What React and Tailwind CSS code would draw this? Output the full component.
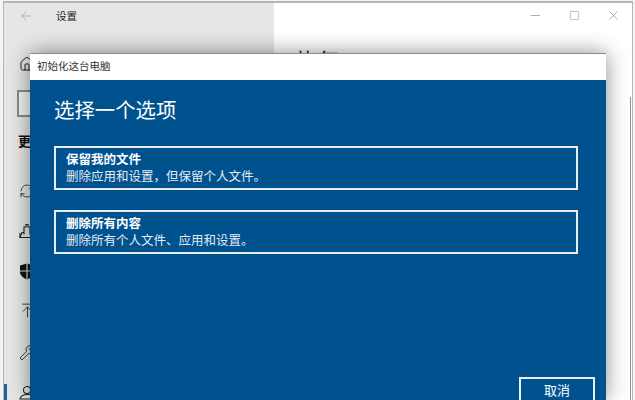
import { Home, RefreshCw, ArrowUpToLine, Wrench, ArrowLeft, Minus, Square, X } from 'lucide-react';

const font = "font-['Noto_Sans_CJK_SC','Noto_Sans',sans-serif]";

const options = [
  { title: '保留我的文件', desc: '删除应用和设置，但保留个人文件。' },
  { title: '删除所有内容', desc: '删除所有个人文件、应用和设置。' },
];

function ShieldIcon() {
  return (
    <svg width="16" height="17" viewBox="0 0 16 17">
      <path d="M8 0.5 L15 2.5 V9 C15 12.5 11.5 15 8 16.5 C4.5 15 1 12.5 1 9 V2.5 Z" fill="#111" />
      <path d="M8 0 V17 M0 8 H16" stroke="#e0e0e0" strokeWidth="1.2" />
    </svg>
  );
}

function BackupIcon() {
  return (
    <svg width="16" height="16" viewBox="0 0 16 16" fill="none" stroke="#222" strokeWidth="1.1">
      <path d="M1 10 V14.5 H15 V10" />
      <path d="M1 14.5 L3 9.5 H5 M11 9.5 H13 L15 14.5" />
      <path d="M5 11.5 V4 H7 V1.5 H9 V4 H11 V11.5" />
    </svg>
  );
}

function PersonIcon() {
  return (
    <svg width="16" height="16" viewBox="0 0 16 16" fill="none" stroke="#222" strokeWidth="1.1">
      <circle cx="8" cy="5" r="3.5" />
      <path d="M1 14 C2 10 5 9.5 8 9.5 H14 V14 Z" />
    </svg>
  );
}

function SidebarIcons() {
  return (
    <div className="flex flex-col items-start pl-[15px]">
      <Home size={16} strokeWidth={1.5} className="mt-[53px] text-[#222]" />
      <div className="mt-[18px] -ml-[2px] w-[30px] h-[27px] border-2 border-[#8a8a8a] bg-[#f2f2f2]" />
      <span className="mt-[15px] -ml-[1px] text-[13px] leading-[18px] font-bold text-[#111]">更</span>
      <RefreshCw size={16} strokeWidth={1.2} className="mt-[33px] text-[#222]" />
      <div className="mt-[24px]"><BackupIcon /></div>
      <div className="mt-[24px]"><ShieldIcon /></div>
      <ArrowUpToLine size={17} strokeWidth={1.2} className="mt-[22px] text-[#222]" />
      <Wrench size={17} strokeWidth={1.2} className="mt-[25px] text-[#222]" />
      <div className="mt-[24px]"><PersonIcon /></div>
    </div>
  );
}

export default function App() {
  return (
    <div className={`relative w-[635px] h-[400px] overflow-hidden bg-[#f4f4f4] ${font}`}>
      {/* settings window behind */}
      <div className="absolute inset-0 ml-[3px] mr-[2px] mt-[1px] border-t-2 border-x border-[#b5b5b5] flex">
        <div className="relative w-[270px] shrink-0 bg-[#e6e6e6]">
          <div className="flex items-center h-[24px] mt-[1px] pl-[15px]">
            <ArrowLeft size={14} strokeWidth={1.2} className="text-[#9a9a9a]" />
            <span className="ml-[23px] text-[10.5px] text-[#222]">设置</span>
          </div>
          <div className="absolute top-0 left-0"><SidebarIcons /></div>
          <div className="absolute left-0 top-[381px] w-[3px] h-[20px] bg-[#1f65a0]" />
        </div>
        <div className="flex-1 bg-white">
          <div className="flex justify-end items-center gap-[25px] h-[24px] pr-[11px] text-[#8c8c8c]">
            <Minus size={15} strokeWidth={1.1} />
            <Square size={11} strokeWidth={1.1} className="mx-[1px]" />
            <X size={15} strokeWidth={1.1} />
          </div>
          <p className="ml-[22px] mt-[17px] text-[22px] leading-[30px] text-[#222]">恢复</p>
        </div>
      </div>
      <div className="absolute right-[4px] top-[97px] w-[1px] h-[303px] bg-[#8f8f8f]" />

      {/* dialog over it */}
      <div className="absolute left-[30px] top-[53px] w-[576px] h-[347px] flex flex-col border-t border-[#8a8a8a] bg-[#00528f] shadow-[0_0_20px_rgba(0,0,0,0.45)]">
        <div className="h-[26px] shrink-0 bg-white flex items-center pl-[7px] pb-[2px] text-[10.5px] text-[#333]">初始化这台电脑</div>
        <div className="flex flex-col flex-1 pl-[24px] pr-[28px] text-white">
          <h1 className="mt-[14px] text-[20.4px] leading-[30px] font-normal">选择一个选项</h1>
          <div className="mt-[22px] flex flex-col gap-[20px]">
            {options.map(o => (
              <div key={o.title} className="h-[44px] border-2 border-[#e8f0f6] pl-[10px] flex flex-col justify-center pb-[1px]">
                <div className="text-[12.5px] leading-[16px] font-bold">{o.title}</div>
                <div className="text-[12.5px] leading-[17px] text-[#e3edf4]">{o.desc}</div>
              </div>
            ))}
          </div>
          <div className="mt-auto -mr-[17px] flex justify-end">
            <button className="w-[76px] h-[30px] -mb-[7px] pb-[4px] border-2 border-[#e8f0f6] text-[13px] text-white">取消</button>
          </div>
        </div>
      </div>
    </div>
  );
}
